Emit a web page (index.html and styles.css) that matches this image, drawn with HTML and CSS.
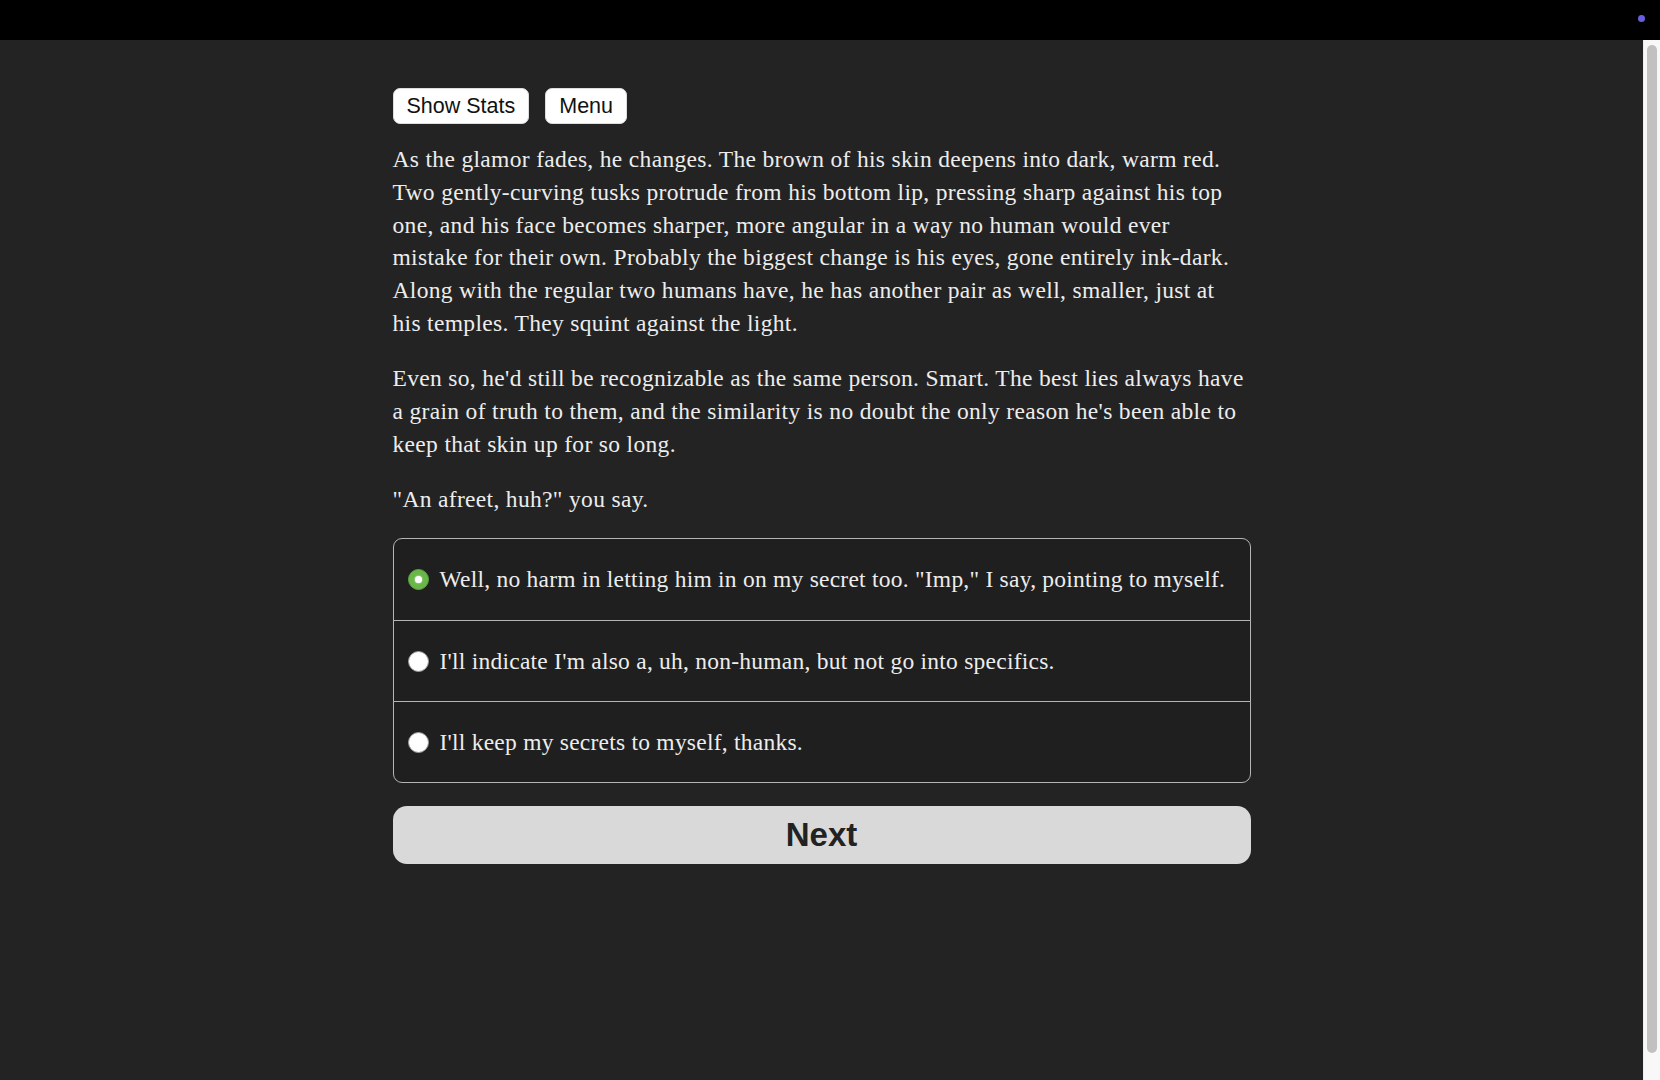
FILE: index.html
```html
<!DOCTYPE html>
<html lang="en">
<head>
<meta charset="utf-8">
<title>Story</title>
<link rel="stylesheet" href="styles.css">
</head>
<body>
<header class="topbar"><span class="dot"></span></header>
<div class="frame">
  <main class="viewport">
    <div class="content">
      <div class="buttons">
        <button class="pill">Show Stats</button>
        <button class="pill">Menu</button>
      </div>
      <div class="story">
        <p>As the glamor fades, he changes. The brown of his skin deepens into dark, warm red. Two gently-curving tusks protrude from his bottom lip, pressing sharp against his top one, and his face becomes sharper, more angular in a way no human would ever mistake for their own. Probably the biggest change is his eyes, gone entirely ink-dark. Along with the regular two humans have, he has another pair as well, smaller, just at his temples. They squint against the light.</p>
        <p>Even so, he'd still be recognizable as the same person. Smart. The best lies always have a grain of truth to them, and the similarity is no doubt the only reason he's been able to keep that skin up for so long.</p>
        <p>"An afreet, huh?" you say.</p>
      </div>
      <div class="choices">
        <label class="choice"><span class="radio checked"></span><span class="label">Well, no harm in letting him in on my secret too. "Imp," I say, pointing to myself.</span></label>
        <label class="choice"><span class="radio"></span><span class="label">I'll indicate I'm also a, uh, non-human, but not go into specifics.</span></label>
        <label class="choice"><span class="radio"></span><span class="label">I'll keep my secrets to myself, thanks.</span></label>
      </div>
      <button class="next">Next</button>
    </div>
  </main>
  <div class="scrollbar"><div class="thumb"></div></div>
</div>
</body>
</html>
```
FILE: styles.css
```css
html, body {
  margin: 0;
  padding: 0;
  height: 100%;
  overflow: hidden;
  background: #000;
}
body {
  display: flex;
  flex-direction: column;
}
.topbar {
  height: 40px;
  flex: none;
  background: #000;
  position: relative;
}
.dot {
  position: absolute;
  right: 15px;
  top: 15px;
  width: 7px;
  height: 7px;
  border-radius: 50%;
  background: #6a5ee0;
}
.frame {
  flex: 1;
  display: flex;
  min-height: 0;
}
.viewport {
  flex: 1;
  overflow: hidden;
  background: #232323;
}
.scrollbar {
  width: 17px;
  flex: none;
  box-sizing: border-box;
  background: #f8f8f8;
  border-left: 1px solid #ededed;
  padding: 5px 3px 0 3px;
}
.thumb {
  height: 1008px;
  background: #c1c1c1;
  border-radius: 5px;
}
.content {
  width: 858px;
  margin: 0 auto;
  padding: 48px 0 0;
  color: #ededed;
  font-family: "Liberation Serif", "Times New Roman", serif;
  font-size: 23.5px;
  letter-spacing: 0.33px;
  line-height: 32.8px;
}
.buttons {
  display: flex;
  gap: 16px;
  margin-bottom: 19px;
}
.pill {
  font-family: "Liberation Sans", Arial, sans-serif;
  font-size: 21.5px;
  line-height: 24px;
  padding: 5px 13px;
  background: #fff;
  color: #111;
  border: 1px solid #ddd;
  border-radius: 7px;
  letter-spacing: 0;
}
.story {
  max-width: 852px;
}
.story p {
  margin: 0 0 22.2px;
}
.choices {
  border: 1px solid #b5b5b5;
  border-radius: 9px;
  background: #1f1f1f;
  margin-top: 23px;
  overflow: hidden;
  letter-spacing: 0.24px;
}
.choice {
  display: flex;
  align-items: center;
  gap: 11px;
  height: 81px;
  padding: 0 14px;
  border-top: 1px solid #b5b5b5;
  box-sizing: border-box;
}
.choice:first-child {
  border-top: none;
}
.radio {
  width: 21px;
  height: 21px;
  border-radius: 50%;
  background: #fff;
  box-sizing: border-box;
  border: 1px solid #999;
  flex: none;
  position: relative;
}
.radio.checked {
  background: #6ab648;
  border-color: #5aa83c;
}
.radio.checked::after {
  content: "";
  position: absolute;
  left: 6px;
  top: 6px;
  width: 7px;
  height: 7px;
  border-radius: 50%;
  background: #fff;
  box-shadow: 0 0 2px #e8ffe0;
}
.next {
  display: block;
  width: 100%;
  height: 58px;
  margin-top: 23px;
  background: #d9d9d9;
  color: #222;
  border: none;
  border-radius: 14px;
  font-family: "Liberation Sans", Arial, sans-serif;
  font-weight: bold;
  font-size: 33px;
  letter-spacing: 0;
}
```
